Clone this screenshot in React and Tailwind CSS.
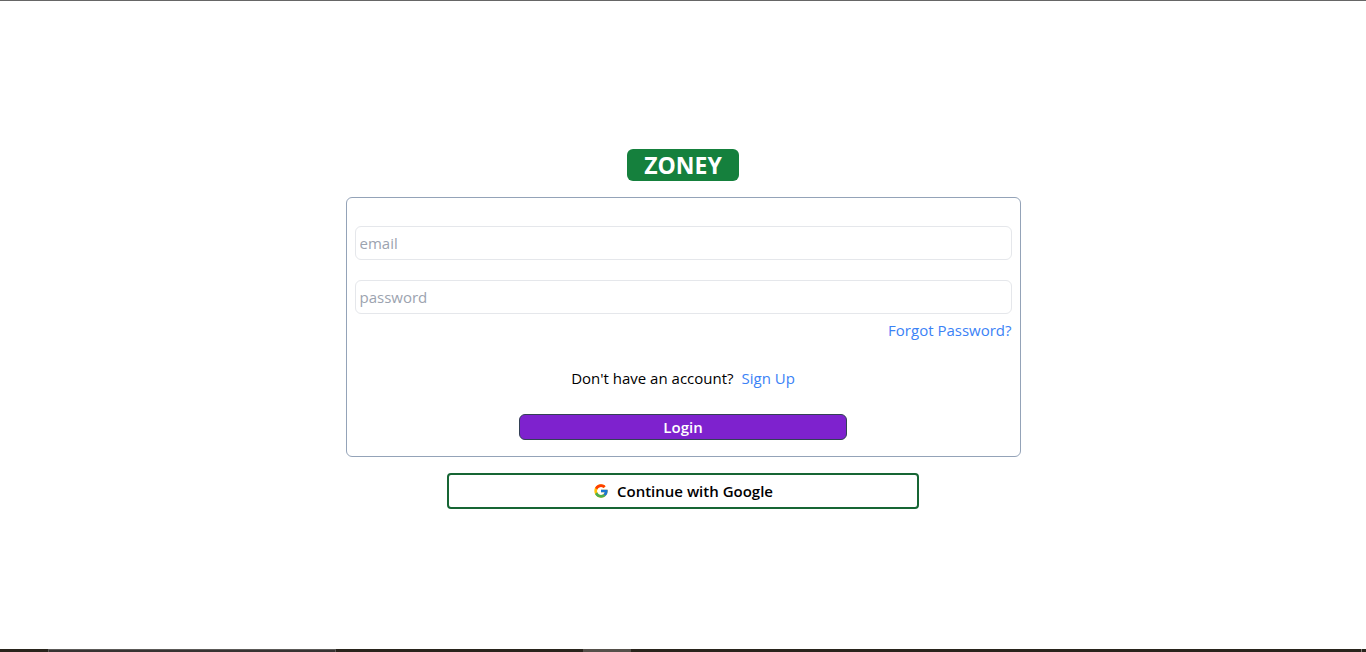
function GoogleIcon() {
  return (
    <svg viewBox="0 0 48 48" className="size-4" aria-hidden="true">
      <path fill="#FFC107" d="M43.6 20H42v0H24v8h11.3C33.7 32.7 29.2 36 24 36c-6.600 0-12-5.400-12-12s5.400-12 12-12c3.100 0 5.800 1.200 7.900 3.100l5.700-5.700C34 6.100 29.300 4 24 4 13 4 4 13 4 24s9 20 20 20 20-9 20-20c0-1.300-.1-2.700-.4-4z" />
      <path fill="#FF3D00" d="M6.300 14.700l6.600 4.800C14.700 15.100 19 12 24 12c3.100 0 5.800 1.200 7.900 3.100l5.700-5.700C34 6.100 29.300 4 24 4 16.300 4 9.700 8.300 6.300 14.700z" />
      <path fill="#4CAF50" d="M24 44c5.200 0 9.900-2 13.400-5.200l-6.200-5.200C29.200 35.100 26.700 36 24 36c-5.200 0-9.600-3.300-11.300-7.900l-6.500 5C9.500 39.600 16.200 44 24 44z" />
      <path fill="#1976D2" d="M43.600 20H24v8h11.300c-.8 2.200-2.200 4.200-4.100 5.600l6.200 5.200C37 39.200 44 34 44 24c0-1.300-.1-2.700-.4-4z" />
    </svg>
  );
}

const field =
  "h-[34px] w-full rounded-md border border-[#e5e7eb] px-1 text-[15px] text-black outline-none placeholder:text-[#9ca3af]";

export default function App() {
  return (
    <div className="flex min-h-screen flex-col border-t border-[#666666] bg-white font-['Segoe_UI','Open_Sans',sans-serif] text-[15px] leading-6 text-black">
      <main className="flex flex-1 flex-col items-center justify-center gap-4 pt-2">
        <h1 className="w-28 rounded-md bg-[#15803d] text-center text-[23px] leading-8 font-bold text-white">ZONEY</h1>

        <form
          className="flex w-full max-w-[675px] flex-col items-center rounded-md border border-[#94a3b8] px-2 pt-7 pb-4"
          onSubmit={(e) => e.preventDefault()}
        >
          <input type="email" aria-label="email" placeholder="email" className={field} />
          <input type="password" aria-label="password" placeholder="password" className={`mt-5 ${field}`} />
          <a href="#forgot" className="mt-1 self-end text-[#3b82f6]">Forgot Password?</a>
          <p className="mt-6 flex gap-2">
            Don't have an account?
            <a href="#signup" className="text-[#3b82f6]">Sign Up</a>
          </p>
          <button
            type="submit"
            className="mt-6 w-1/2 rounded-md border border-[#334155] bg-[#7e22ce] font-semibold text-white"
          >
            Login
          </button>
        </form>

        <button
          type="button"
          className="flex h-9 w-[70%] max-w-[472px] items-center justify-center gap-2 rounded border-2 border-[#166534] font-semibold"
        >
          <GoogleIcon />
          Continue with Google
        </button>
      </main>

      <footer className="flex h-[3px] bg-[#29241c]">
        <div className="w-12" />
        <div className="w-72 border-x border-t border-[#5c5a58] bg-[#363332]" />
        <div className="w-[247px]" />
        <div className="w-12 bg-[#55504a]" />
        <div className="mr-1 ml-auto w-px bg-[#85817a]" />
      </footer>
    </div>
  );
}
